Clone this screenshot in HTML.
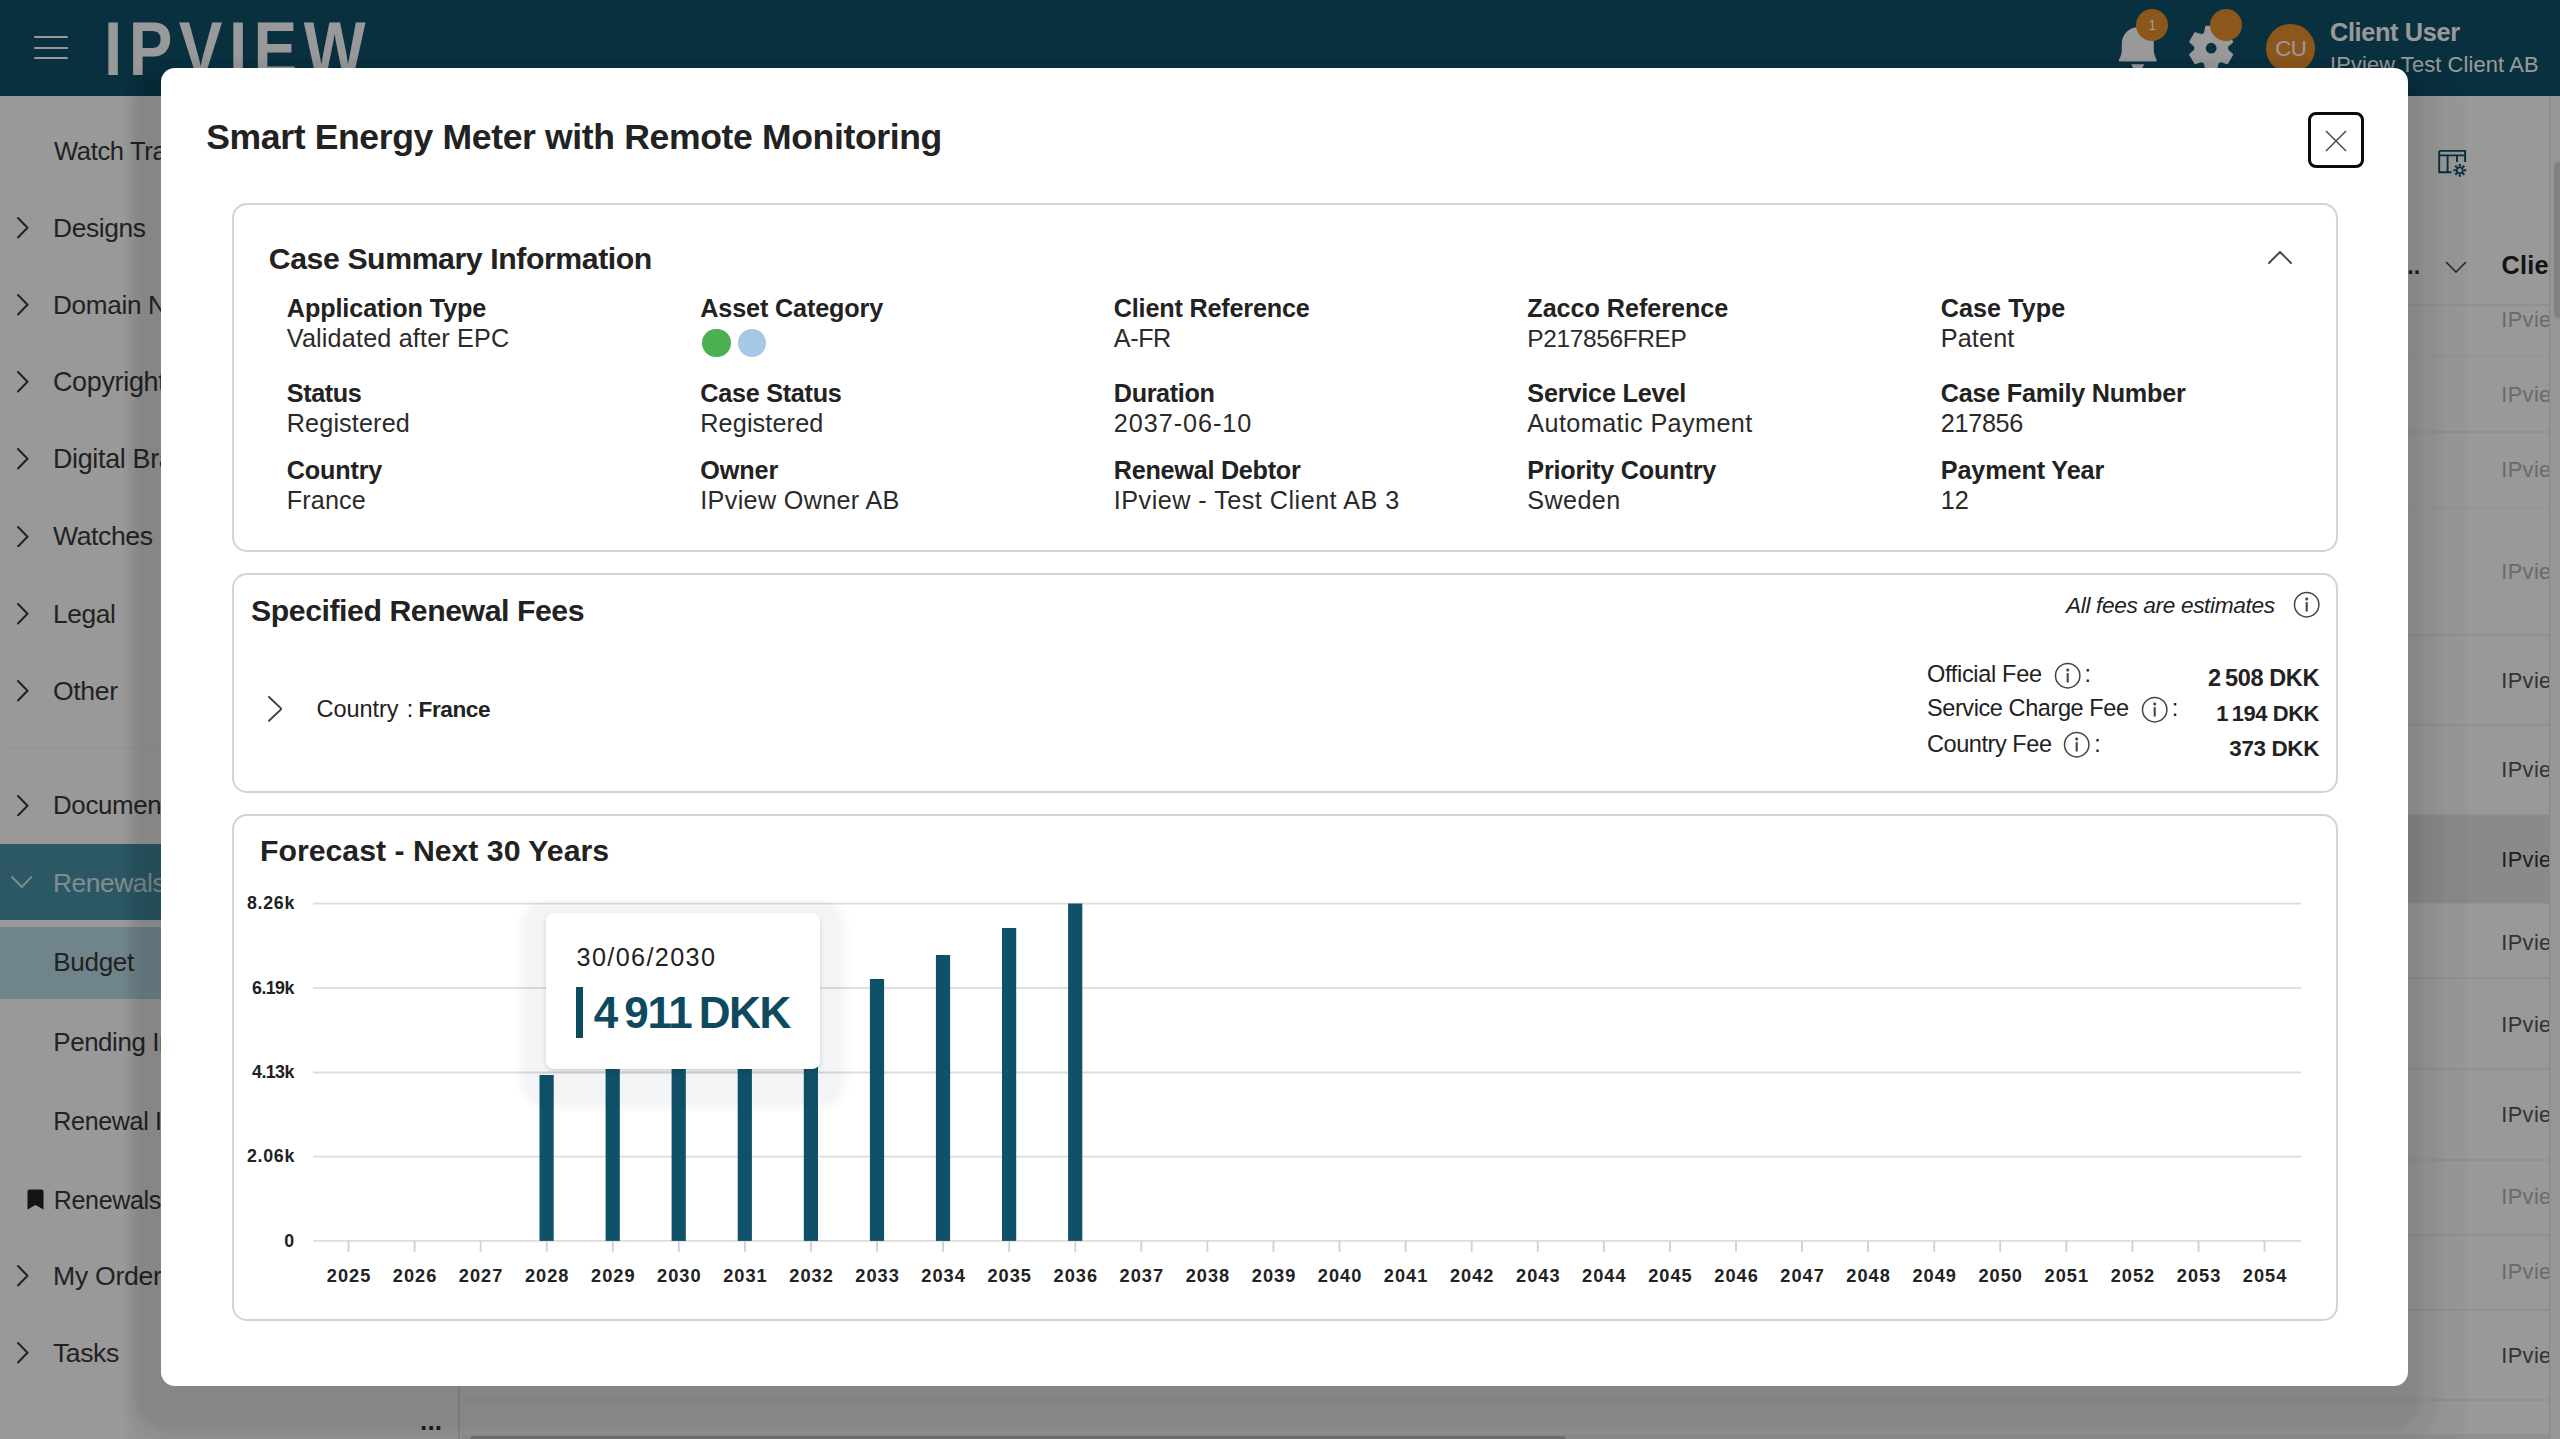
<!DOCTYPE html>
<html lang="en"><head><meta charset="utf-8"><title>IPview - Renewals Budget</title>
<style>
*{box-sizing:border-box;margin:0;padding:0}
html,body{width:2560px;height:1439px;overflow:hidden;background:#fff}
body{font-family:"Liberation Sans", Arial, sans-serif;color:#212121;position:relative}
.t{position:absolute;line-height:1;white-space:nowrap}
.abs{position:absolute}
#app{position:absolute;left:0;top:0;width:2560px;height:1439px;overflow:hidden;background:#fff}
#hdr{position:absolute;left:0;top:0;width:2560px;height:96px;background:#0f516a}
#side{position:absolute;left:0;top:96px;width:460px;height:1343px;background:#fff;border-right:2px solid #e4e4e4}
#main{position:absolute;left:462px;top:96px;width:2098px;height:1343px;background:#fff}
#ovl{position:absolute;left:0;top:0;width:2560px;height:1439px;background:rgba(0,0,0,.4)}
#modal{position:absolute;left:161px;top:68px;width:2247px;height:1318px;background:#fff;border-radius:14px;
 box-shadow:-6px 24px 5px 20px rgba(0,0,0,.05),-1px 24px 5px 33px rgba(0,0,0,.034),11px 40px 6px 46px rgba(0,0,0,.026)}
.card{position:absolute;border:2px solid #d3d3d3;border-radius:15px;background:#fff}
.badge{position:absolute;width:32px;height:32px;border-radius:50%;background:#e8912d}
.sep{position:absolute;height:1.5px;background:#f2f2f2}
</style></head><body>
<div id="app">
<div id="hdr">
<div class="abs" style="left:34px;top:36px;width:34px;height:2.4px;background:#fff;border-radius:1px"></div>
<div class="abs" style="left:34px;top:46.5px;width:34px;height:2.4px;background:#fff;border-radius:1px"></div>
<div class="abs" style="left:34px;top:57px;width:34px;height:2.4px;background:#fff;border-radius:1px"></div>
<div class="t" style="top:11px;font-size:76.5px;left:103.5px;font-weight:700;color:#fff;letter-spacing:7.60px;transform:scaleX(.855);transform-origin:0 0;">IPVIEW</div>
<svg class="abs" style="left:2110px;top:20px" width="56" height="56" viewBox="2110 20 56 56"><path d="M2121.8 43.2A16 16 0 0 1 2153.8 43.2V49.5C2153.8 54 2155.2 57.2 2156.6 59.6a1.300 1.300 0 0 1-1.200 2H2120.200a1.300 1.300 0 0 1-1.200-2C2120.400 57.2 2121.8 54 2121.8 49.5Z" fill="#fff"/><path d="M2131.2 64.300H2144.200L2141.300 70H2134.100Z" fill="#fff"/></svg>
<div class="badge" style="left:2136.100px;top:9.400px"></div>
<div class="t" style="top:18px;font-size:14.6px;left:2148.3px;color:#fff;">1</div>
<svg class="abs" style="left:2186.4px;top:22.8px" width="50.4" height="50.4" viewBox="0 0 50.4 50.4"><path d="M18.61 10.40 L20.02 3.61 L30.38 3.61 L31.79 10.40 L34.73 12.09 L41.30 9.92 L46.49 18.89 L41.32 23.51 L41.32 26.89 L46.49 31.51 L41.30 40.48 L34.73 38.31 L31.79 40.00 L30.38 46.79 L20.02 46.79 L18.61 40.00 L15.67 38.31 L9.10 40.48 L3.91 31.51 L9.08 26.89 L9.08 23.51 L3.91 18.89 L9.10 9.92 L15.67 12.09Z M19.80 25.20 a5.40 5.40 0 1 0 10.80 0 a5.40 5.40 0 1 0 -10.80 0Z" fill="#fff" fill-rule="evenodd"/><path d="M18.61 10.40 L20.02 3.61 L30.38 3.61 L31.79 10.40 L34.73 12.09 L41.30 9.92 L46.49 18.89 L41.32 23.51 L41.32 26.89 L46.49 31.51 L41.30 40.48 L34.73 38.31 L31.79 40.00 L30.38 46.79 L20.02 46.79 L18.61 40.00 L15.67 38.31 L9.10 40.48 L3.91 31.51 L9.08 26.89 L9.08 23.51 L3.91 18.89 L9.10 9.92 L15.67 12.09Z" fill="none" stroke="#fff" stroke-width="1.6" stroke-linejoin="round"/></svg>
<div class="badge" style="left:2209.700px;top:9.400px"></div>
<div class="abs" style="left:2265.700px;top:23.700px;width:49.200px;height:49.200px;border-radius:50%;background:#e8912d"></div>
<div class="t" style="top:38px;font-size:22.3px;left:2275.2px;color:#fff;letter-spacing:-0.42px;">CU</div>
<div class="t" style="top:20px;font-size:25.34px;left:2330.0px;font-weight:700;color:#fff;letter-spacing:-0.37px;">Client User</div>
<div class="t" style="top:54px;font-size:21.84px;left:2330.0px;color:#fff;letter-spacing:0.13px;">IPview Test Client AB</div>
</div>
<div id="side">
<div class="t" style="top:43px;font-size:25.6px;left:54.0px;color:#3a3a3a;letter-spacing:-0.38px;">Watch Trademarks</div>
<svg class="abs" style="left:17px;top:121.39999999999999px" width="11.5" height="21.5" viewBox="0 0 11.5 21.5"><polyline points="1,1 10.5,10.75 1,20.5" fill="none" stroke="#3a3a3a" stroke-width="2" stroke-linecap="round" stroke-linejoin="round"/></svg>
<div class="t" style="top:119px;font-size:26.37px;left:53.0px;color:#3a3a3a;letter-spacing:-0.37px;">Designs</div>
<svg class="abs" style="left:17px;top:198.39999999999998px" width="11.5" height="21.5" viewBox="0 0 11.5 21.5"><polyline points="1,1 10.5,10.75 1,20.5" fill="none" stroke="#3a3a3a" stroke-width="2" stroke-linecap="round" stroke-linejoin="round"/></svg>
<div class="t" style="top:196px;font-size:26.11px;left:53.0px;color:#3a3a3a;letter-spacing:-0.31px;">Domain Names</div>
<svg class="abs" style="left:17px;top:275.4px" width="11.5" height="21.5" viewBox="0 0 11.5 21.5"><polyline points="1,1 10.5,10.75 1,20.5" fill="none" stroke="#3a3a3a" stroke-width="2" stroke-linecap="round" stroke-linejoin="round"/></svg>
<div class="t" style="top:273px;font-size:26.88px;left:53.0px;color:#3a3a3a;letter-spacing:-0.29px;">Copyrights</div>
<svg class="abs" style="left:17px;top:352.4px" width="11.5" height="21.5" viewBox="0 0 11.5 21.5"><polyline points="1,1 10.5,10.75 1,20.5" fill="none" stroke="#3a3a3a" stroke-width="2" stroke-linecap="round" stroke-linejoin="round"/></svg>
<div class="t" style="top:350px;font-size:26.88px;left:53.0px;color:#3a3a3a;letter-spacing:-0.32px;">Digital Brand Protection</div>
<svg class="abs" style="left:17px;top:429.90000000000003px" width="11.5" height="21.5" viewBox="0 0 11.5 21.5"><polyline points="1,1 10.5,10.75 1,20.5" fill="none" stroke="#3a3a3a" stroke-width="2" stroke-linecap="round" stroke-linejoin="round"/></svg>
<div class="t" style="top:427px;font-size:26.62px;left:53.0px;color:#3a3a3a;letter-spacing:-0.42px;">Watches</div>
<svg class="abs" style="left:17px;top:507.40000000000003px" width="11.5" height="21.5" viewBox="0 0 11.5 21.5"><polyline points="1,1 10.5,10.75 1,20.5" fill="none" stroke="#3a3a3a" stroke-width="2" stroke-linecap="round" stroke-linejoin="round"/></svg>
<div class="t" style="top:505px;font-size:26.37px;left:53.0px;color:#3a3a3a;letter-spacing:-0.38px;">Legal</div>
<svg class="abs" style="left:17px;top:584.4000000000001px" width="11.5" height="21.5" viewBox="0 0 11.5 21.5"><polyline points="1,1 10.5,10.75 1,20.5" fill="none" stroke="#3a3a3a" stroke-width="2" stroke-linecap="round" stroke-linejoin="round"/></svg>
<div class="t" style="top:582px;font-size:26.62px;left:53.0px;color:#3a3a3a;letter-spacing:-0.39px;">Other</div>
<div class="sep" style="left:4px;top:650.5px;width:452px"></div>
<svg class="abs" style="left:17px;top:698.9000000000001px" width="11.5" height="21.5" viewBox="0 0 11.5 21.5"><polyline points="1,1 10.5,10.75 1,20.5" fill="none" stroke="#3a3a3a" stroke-width="2" stroke-linecap="round" stroke-linejoin="round"/></svg>
<div class="t" style="top:697px;font-size:25.86px;left:53.0px;color:#3a3a3a;letter-spacing:-0.34px;">Documents</div>
<div class="abs" style="left:0;top:747.5px;width:460px;height:76.5px;background:#4a92a8"></div>
<svg class="abs" style="left:10.5px;top:780.2px" width="21.5" height="12" viewBox="0 0 21.5 12"><polyline points="1,1 10.75,11 20.5,1" fill="none" stroke="#d5eaf0" stroke-width="1.9" stroke-linecap="round" stroke-linejoin="round"/></svg>
<div class="t" style="top:774px;font-size:26.37px;left:53.0px;color:#d5eaf0;letter-spacing:-0.45px;">Renewals</div>
<div class="abs" style="left:0;top:831px;width:460px;height:72px;background:#bbdde8"></div>
<div class="t" style="top:853px;font-size:26.11px;left:53.3px;color:#3a3a3a;letter-spacing:-0.35px;">Budget</div>
<div class="t" style="top:934px;font-size:25.86px;left:53.3px;color:#3a3a3a;letter-spacing:-0.40px;">Pending Instructions</div>
<div class="t" style="top:1013px;font-size:25.09px;left:53.3px;color:#3a3a3a;letter-spacing:-0.35px;">Renewal Instructions</div>
<svg class="abs" style="left:27px;top:1093px" width="17" height="21" viewBox="0 0 17 21"><path d="M2.500 0.500h12a2 2 0 0 1 2 2V20.500l-8-4.600-8 4.600V2.500a2 2 0 0 1 2-2z" fill="#222"/></svg>
<div class="t" style="top:1092px;font-size:25.09px;left:53.8px;color:#3a3a3a;letter-spacing:-0.38px;">Renewals Overview</div>
<svg class="abs" style="left:17px;top:1169.4px" width="11.5" height="21.5" viewBox="0 0 11.5 21.5"><polyline points="1,1 10.5,10.75 1,20.5" fill="none" stroke="#3a3a3a" stroke-width="2" stroke-linecap="round" stroke-linejoin="round"/></svg>
<div class="t" style="top:1167px;font-size:26.62px;left:53.0px;color:#3a3a3a;letter-spacing:-0.29px;">My Orders</div>
<svg class="abs" style="left:17px;top:1246.4px" width="11.5" height="21.5" viewBox="0 0 11.5 21.5"><polyline points="1,1 10.5,10.75 1,20.5" fill="none" stroke="#3a3a3a" stroke-width="2" stroke-linecap="round" stroke-linejoin="round"/></svg>
<div class="t" style="top:1244px;font-size:26.62px;left:53.0px;color:#3a3a3a;letter-spacing:-0.43px;">Tasks</div>
<div class="t" style="top:1312px;font-size:26px;left:420.0px;font-weight:700;color:#333;letter-spacing:0.16px;">...</div>
</div>
<div id="main">
<svg class="abs" style="left:1974px;top:52px" width="34" height="32" viewBox="2436 148 34 32" fill="none" stroke="#0f516a"><path d="M2439.200 150.900H2465.100V162M2439.200 150.900V172.200H2451.500M2439.200 155.400H2465.100M2447.600 155.400V172.200M2457 155.400V162" stroke-width="1.900"/><circle cx="2459.8" cy="170.3" r="3" stroke-width="1.700"/><path d="M2463.70 170.30L2466.20 170.30M2462.56 173.06L2464.33 174.83M2459.80 174.20L2459.80 176.70M2457.04 173.06L2455.27 174.83M2455.90 170.30L2453.40 170.30M2457.04 167.54L2455.27 165.77M2459.80 166.40L2459.80 163.90M2462.56 167.54L2464.33 165.77" stroke-width="2.100"/></svg>
<div class="t" style="top:159px;font-size:23.4px;left:1938.8px;font-weight:700;color:#333;">...</div>
<svg class="abs" style="left:1983px;top:164.5px" width="22" height="12" viewBox="0 0 22 12"><polyline points="1,1 11,11 21,1" fill="none" stroke="#444" stroke-width="1.600"/></svg>
<div class="t" style="top:157px;font-size:25.2px;left:2039.5px;font-weight:700;color:#222;letter-spacing:0.30px;">Client</div>
<div class="sep" style="left:0;top:208px;width:2087px"></div>
<div class="sep" style="left:0;top:259.5px;width:2087px"></div>
<div class="sep" style="left:0;top:335px;width:2087px"></div>
<div class="sep" style="left:0;top:410.5px;width:2087px"></div>
<div class="sep" style="left:0;top:538px;width:2087px"></div>
<div class="sep" style="left:0;top:628px;width:2087px"></div>
<div class="sep" style="left:0;top:718px;width:2087px"></div>
<div class="sep" style="left:0;top:806px;width:2087px"></div>
<div class="sep" style="left:0;top:881px;width:2087px"></div>
<div class="sep" style="left:0;top:972px;width:2087px"></div>
<div class="sep" style="left:0;top:1063px;width:2087px"></div>
<div class="sep" style="left:0;top:1138px;width:2087px"></div>
<div class="sep" style="left:0;top:1213px;width:2087px"></div>
<div class="sep" style="left:0;top:1303px;width:2087px"></div>
<div class="abs" style="left:0;top:719px;width:2087px;height:87.5px;background:#e7e7e7"></div>
<div class="t" style="top:213px;font-size:21.84px;left:2039.3px;color:#b2b2b2;letter-spacing:0.35px;">IPview</div>
<div class="t" style="top:288px;font-size:21.84px;left:2039.3px;color:#b2b2b2;letter-spacing:0.35px;">IPview</div>
<div class="t" style="top:363px;font-size:21.84px;left:2039.3px;color:#b2b2b2;letter-spacing:0.35px;">IPview</div>
<div class="t" style="top:465px;font-size:21.84px;left:2039.3px;color:#b2b2b2;letter-spacing:0.35px;">IPview</div>
<div class="t" style="top:574px;font-size:21.84px;left:2039.3px;color:#555;letter-spacing:0.35px;">IPview</div>
<div class="t" style="top:663px;font-size:21.84px;left:2039.3px;color:#555;letter-spacing:0.35px;">IPview</div>
<div class="t" style="top:753px;font-size:21.84px;left:2039.3px;color:#333;letter-spacing:0.35px;">IPview</div>
<div class="t" style="top:836px;font-size:21.84px;left:2039.3px;color:#555;letter-spacing:0.35px;">IPview</div>
<div class="t" style="top:918px;font-size:21.84px;left:2039.3px;color:#555;letter-spacing:0.35px;">IPview</div>
<div class="t" style="top:1008px;font-size:21.84px;left:2039.3px;color:#555;letter-spacing:0.35px;">IPview</div>
<div class="t" style="top:1090px;font-size:21.84px;left:2039.3px;color:#b2b2b2;letter-spacing:0.35px;">IPview</div>
<div class="t" style="top:1165px;font-size:21.84px;left:2039.3px;color:#b2b2b2;letter-spacing:0.35px;">IPview</div>
<div class="t" style="top:1249px;font-size:21.84px;left:2039.3px;color:#555;letter-spacing:0.35px;">IPview</div>
<div class="abs" style="left:2087px;top:0;width:11px;height:1343px;background:#fafafa;border-left:1.5px solid #e2e2e2"></div>
<div class="abs" style="left:2092px;top:66px;width:8px;height:156px;border-radius:4px;background:#d8d8d8"></div>
<div class="abs" style="left:69px;top:1330.5px;width:22px;height:22px;border-radius:50%;border:1.5px solid #fff"></div>
<div class="abs" style="left:0;top:1338px;width:2087px;height:6px;background:#f1f1f1"></div>
<div class="abs" style="left:8px;top:1339.5px;width:1096px;height:8px;border-radius:4px;background:#c2c2c2"></div>
</div>
</div>
<div id="ovl"></div>
<div id="modal">
<div class="t" style="top:52px;font-size:35.55px;left:45.2px;font-weight:700;color:#222;letter-spacing:-0.36px;">Smart Energy Meter with Remote Monitoring</div>
<div class="abs" style="left:2147px;top:44px;width:56px;height:56px;border:3.5px solid #0a0a0a;border-radius:8px"></div>
<svg class="abs" style="left:2164px;top:61.5px" width="22" height="22" viewBox="0 0 22 22"><path d="M1 1l20 20M21 1L1 21" stroke="#4a4a4a" stroke-width="1.500" fill="none"/></svg>
<div class="card" style="left:71px;top:135px;width:2106px;height:349px"></div>
<div class="t" style="top:176px;font-size:30.24px;left:107.8px;font-weight:700;color:#222;letter-spacing:-0.42px;">Case Summary Information</div>
<svg class="abs" style="left:2107px;top:182.5px" width="24" height="13" viewBox="0 0 24 13"><polyline points="1,12 12.0,1 23,12" fill="none" stroke="#444" stroke-width="1.9" stroke-linecap="round" stroke-linejoin="round"/></svg>
<div class="t" style="top:228px;font-size:25.2px;left:125.8px;font-weight:700;color:#222;letter-spacing:-0.10px;">Application Type</div>
<div class="t" style="top:258px;font-size:25.2px;left:125.8px;color:#2a2a2a;letter-spacing:0.17px;">Validated after EPC</div>
<div class="t" style="top:228px;font-size:25.2px;left:539.3px;font-weight:700;color:#222;letter-spacing:-0.14px;">Asset Category</div>
<div class="t" style="top:228px;font-size:25.2px;left:952.8px;font-weight:700;color:#222;letter-spacing:-0.19px;">Client Reference</div>
<div class="t" style="top:258px;font-size:25.2px;left:952.8px;color:#2a2a2a;letter-spacing:-0.42px;">A-FR</div>
<div class="t" style="top:228px;font-size:25.2px;left:1366.3px;font-weight:700;color:#222;letter-spacing:-0.04px;">Zacco Reference</div>
<div class="t" style="top:259px;font-size:24.48px;left:1366.3px;color:#2a2a2a;letter-spacing:-0.37px;">P217856FREP</div>
<div class="t" style="top:228px;font-size:25.2px;left:1779.8px;font-weight:700;color:#222;letter-spacing:0.04px;">Case Type</div>
<div class="t" style="top:258px;font-size:25.2px;left:1779.8px;color:#2a2a2a;letter-spacing:0.13px;">Patent</div>
<div class="t" style="top:313px;font-size:25.2px;left:125.8px;font-weight:700;color:#222;letter-spacing:-0.40px;">Status</div>
<div class="t" style="top:343px;font-size:25.2px;left:125.8px;color:#2a2a2a;letter-spacing:0.13px;">Registered</div>
<div class="t" style="top:313px;font-size:25.2px;left:539.3px;font-weight:700;color:#222;letter-spacing:-0.27px;">Case Status</div>
<div class="t" style="top:343px;font-size:25.2px;left:539.3px;color:#2a2a2a;letter-spacing:0.13px;">Registered</div>
<div class="t" style="top:313px;font-size:25.2px;left:952.8px;font-weight:700;color:#222;letter-spacing:-0.36px;">Duration</div>
<div class="t" style="top:343px;font-size:25.2px;left:952.8px;color:#2a2a2a;letter-spacing:0.96px;">2037-06-10</div>
<div class="t" style="top:313px;font-size:25.2px;left:1366.3px;font-weight:700;color:#222;letter-spacing:-0.17px;">Service Level</div>
<div class="t" style="top:343px;font-size:25.2px;left:1366.3px;color:#2a2a2a;letter-spacing:0.41px;">Automatic Payment</div>
<div class="t" style="top:313px;font-size:25.2px;left:1779.8px;font-weight:700;color:#222;letter-spacing:-0.25px;">Case Family Number</div>
<div class="t" style="top:343px;font-size:25.2px;left:1779.8px;color:#2a2a2a;letter-spacing:-0.31px;">217856</div>
<div class="t" style="top:390px;font-size:25.2px;left:125.8px;font-weight:700;color:#222;letter-spacing:-0.17px;">Country</div>
<div class="t" style="top:420px;font-size:25.2px;left:125.8px;color:#2a2a2a;letter-spacing:0.12px;">France</div>
<div class="t" style="top:390px;font-size:25.2px;left:539.3px;font-weight:700;color:#222;letter-spacing:-0.10px;">Owner</div>
<div class="t" style="top:420px;font-size:25.2px;left:539.3px;color:#2a2a2a;letter-spacing:0.32px;">IPview Owner AB</div>
<div class="t" style="top:390px;font-size:25.2px;left:952.8px;font-weight:700;color:#222;letter-spacing:-0.26px;">Renewal Debtor</div>
<div class="t" style="top:420px;font-size:25.2px;left:952.8px;color:#2a2a2a;letter-spacing:0.48px;">IPview - Test Client AB 3</div>
<div class="t" style="top:390px;font-size:25.2px;left:1366.3px;font-weight:700;color:#222;letter-spacing:-0.18px;">Priority Country</div>
<div class="t" style="top:420px;font-size:25.2px;left:1366.3px;color:#2a2a2a;letter-spacing:0.39px;">Sweden</div>
<div class="t" style="top:390px;font-size:25.2px;left:1779.8px;font-weight:700;color:#222;letter-spacing:-0.12px;">Payment Year</div>
<div class="t" style="top:420px;font-size:25.2px;left:1779.8px;color:#2a2a2a;">12</div>
<div class="abs" style="left:541.3px;top:260.8px;width:28.4px;height:28.4px;border-radius:50%;background:#4caf50"></div>
<div class="abs" style="left:576.8px;top:260.8px;width:28.4px;height:28.4px;border-radius:50%;background:#a6c8e6"></div>
<div class="card" style="left:71px;top:505px;width:2106px;height:219.5px"></div>
<div class="t" style="top:528px;font-size:30.24px;left:90.0px;font-weight:700;color:#222;letter-spacing:-0.44px;">Specified Renewal Fees</div>
<div class="t" style="top:526px;font-size:22.68px;left:1905.0px;color:#222;font-style:italic;letter-spacing:-0.37px;">All fees are estimates</div>
<svg class="abs" style="left:2131.8px;top:522.8px" width="27.4" height="27.4" viewBox="0 0 27.4 27.4"><circle cx="13.70" cy="13.70" r="12.2" fill="none" stroke="#444" stroke-width="1.5"/><circle cx="13.70" cy="8.10" r="1.5" fill="#444"/><rect x="12.65" y="11.10" width="2.1" height="9.4" fill="#444"/></svg>
<svg class="abs" style="left:106.5px;top:627.8px" width="14.5" height="25.8" viewBox="0 0 14.5 25.8"><polyline points="1,1 13.5,12.9 1,24.8" fill="none" stroke="#444" stroke-width="2" stroke-linecap="round" stroke-linejoin="round"/></svg>
<div class="t" style="top:630px;font-size:23.52px;left:155.5px;color:#222;letter-spacing:-0.06px;">Country</div>
<div class="t" style="top:630px;font-size:23.52px;left:245.8px;color:#222;">:</div>
<div class="t" style="top:631px;font-size:22.62px;left:257.5px;font-weight:700;color:#222;letter-spacing:-0.43px;">France</div>
<div class="t" style="top:595px;font-size:23.52px;left:1766.0px;color:#222;letter-spacing:-0.32px;">Official Fee</div>
<svg class="abs" style="left:1892.8px;top:593.9px" width="27.4" height="27.4" viewBox="0 0 27.4 27.4"><circle cx="13.70" cy="13.70" r="12.2" fill="none" stroke="#444" stroke-width="1.5"/><circle cx="13.70" cy="8.10" r="1.5" fill="#444"/><rect x="12.65" y="11.10" width="2.1" height="9.4" fill="#444"/></svg>
<div class="t" style="top:595px;font-size:23.52px;left:1923.5px;color:#222;">:</div>
<div class="t" style="top:599px;font-size:23.52px;right:89.0px;font-weight:700;color:#222;letter-spacing:-0.39px;">2 508 DKK</div>
<div class="t" style="top:629px;font-size:23.52px;left:1766.0px;color:#222;letter-spacing:-0.42px;">Service Charge Fee</div>
<svg class="abs" style="left:1979.8px;top:628.1px" width="27.4" height="27.4" viewBox="0 0 27.4 27.4"><circle cx="13.70" cy="13.70" r="12.2" fill="none" stroke="#444" stroke-width="1.5"/><circle cx="13.70" cy="8.10" r="1.5" fill="#444"/><rect x="12.65" y="11.10" width="2.1" height="9.4" fill="#444"/></svg>
<div class="t" style="top:629px;font-size:23.52px;left:2010.8px;color:#222;">:</div>
<div class="t" style="top:635px;font-size:21.95px;right:89.0px;font-weight:700;color:#222;letter-spacing:-0.44px;">1 194 DKK</div>
<div class="t" style="top:665px;font-size:23.52px;left:1766.0px;color:#222;letter-spacing:-0.44px;">Country Fee</div>
<svg class="abs" style="left:1902.3px;top:663.1px" width="27.4" height="27.4" viewBox="0 0 27.4 27.4"><circle cx="13.70" cy="13.70" r="12.2" fill="none" stroke="#444" stroke-width="1.5"/><circle cx="13.70" cy="8.10" r="1.5" fill="#444"/><rect x="12.65" y="11.10" width="2.1" height="9.4" fill="#444"/></svg>
<div class="t" style="top:665px;font-size:23.52px;left:1933.3px;color:#222;">:</div>
<div class="t" style="top:670px;font-size:22.4px;right:89.0px;font-weight:700;color:#222;letter-spacing:-0.35px;">373 DKK</div>
<div class="card" style="left:71px;top:745.5px;width:2106px;height:507px"></div>
<div class="t" style="top:768px;font-size:30.24px;left:99.0px;font-weight:700;color:#222;">Forecast - Next 30 Years</div>
<svg class="abs" style="left:71px;top:812px" width="2106" height="430" viewBox="232 880 2106 430" font-family="Liberation Sans, Arial, sans-serif" font-weight="700" font-size="17.6" fill="#222"><line x1="313" x2="2301" y1="903.7" y2="903.7" stroke="#dcdcdc" stroke-width="1.8"/><line x1="313" x2="2301" y1="988.1" y2="988.1" stroke="#dcdcdc" stroke-width="1.8"/><line x1="313" x2="2301" y1="1072.5" y2="1072.5" stroke="#dcdcdc" stroke-width="1.8"/><line x1="313" x2="2301" y1="1156.7" y2="1156.7" stroke="#dcdcdc" stroke-width="1.8"/><line x1="313" x2="2301" y1="1240.9" y2="1240.9" stroke="#dcdcdc" stroke-width="1.8"/><text x="246.9" y="909.3" textLength="47.4" lengthAdjust="spacing" font-size="17.8">8.26k</text><text x="252.1" y="993.7" textLength="42.2" lengthAdjust="spacing" font-size="17.8">6.19k</text><text x="252.1" y="1078.1" textLength="42.2" lengthAdjust="spacing" font-size="17.8">4.13k</text><text x="246.9" y="1162.3" textLength="47.4" lengthAdjust="spacing" font-size="17.8">2.06k</text><text x="284.3" y="1246.5" textLength="10" lengthAdjust="spacing" font-size="17.8">0</text><line x1="348.5" x2="348.5" y1="1240.9" y2="1251.8" stroke="#d0d0d0" stroke-width="1.8"/><text x="348.5" y="1281.5" text-anchor="middle" textLength="43.5" lengthAdjust="spacing" font-size="18.2">2025</text><line x1="414.6" x2="414.6" y1="1240.9" y2="1251.8" stroke="#d0d0d0" stroke-width="1.8"/><text x="414.6" y="1281.5" text-anchor="middle" textLength="43.5" lengthAdjust="spacing" font-size="18.2">2026</text><line x1="480.6" x2="480.6" y1="1240.9" y2="1251.8" stroke="#d0d0d0" stroke-width="1.8"/><text x="480.6" y="1281.5" text-anchor="middle" textLength="43.5" lengthAdjust="spacing" font-size="18.2">2027</text><line x1="546.7" x2="546.7" y1="1240.9" y2="1251.8" stroke="#d0d0d0" stroke-width="1.8"/><text x="546.7" y="1281.5" text-anchor="middle" textLength="43.5" lengthAdjust="spacing" font-size="18.2">2028</text><line x1="612.8" x2="612.8" y1="1240.9" y2="1251.8" stroke="#d0d0d0" stroke-width="1.8"/><text x="612.8" y="1281.5" text-anchor="middle" textLength="43.5" lengthAdjust="spacing" font-size="18.2">2029</text><line x1="678.8" x2="678.8" y1="1240.9" y2="1251.8" stroke="#d0d0d0" stroke-width="1.8"/><text x="678.8" y="1281.5" text-anchor="middle" textLength="43.5" lengthAdjust="spacing" font-size="18.2">2030</text><line x1="744.9" x2="744.9" y1="1240.9" y2="1251.8" stroke="#d0d0d0" stroke-width="1.8"/><text x="744.9" y="1281.5" text-anchor="middle" textLength="43.5" lengthAdjust="spacing" font-size="18.2">2031</text><line x1="811.0" x2="811.0" y1="1240.9" y2="1251.8" stroke="#d0d0d0" stroke-width="1.8"/><text x="811.0" y="1281.5" text-anchor="middle" textLength="43.5" lengthAdjust="spacing" font-size="18.2">2032</text><line x1="877.1" x2="877.1" y1="1240.9" y2="1251.8" stroke="#d0d0d0" stroke-width="1.8"/><text x="877.1" y="1281.5" text-anchor="middle" textLength="43.5" lengthAdjust="spacing" font-size="18.2">2033</text><line x1="943.1" x2="943.1" y1="1240.9" y2="1251.8" stroke="#d0d0d0" stroke-width="1.8"/><text x="943.1" y="1281.5" text-anchor="middle" textLength="43.5" lengthAdjust="spacing" font-size="18.2">2034</text><line x1="1009.2" x2="1009.2" y1="1240.9" y2="1251.8" stroke="#d0d0d0" stroke-width="1.8"/><text x="1009.2" y="1281.5" text-anchor="middle" textLength="43.5" lengthAdjust="spacing" font-size="18.2">2035</text><line x1="1075.3" x2="1075.3" y1="1240.9" y2="1251.8" stroke="#d0d0d0" stroke-width="1.8"/><text x="1075.3" y="1281.5" text-anchor="middle" textLength="43.5" lengthAdjust="spacing" font-size="18.2">2036</text><line x1="1141.3" x2="1141.3" y1="1240.9" y2="1251.8" stroke="#d0d0d0" stroke-width="1.8"/><text x="1141.3" y="1281.5" text-anchor="middle" textLength="43.5" lengthAdjust="spacing" font-size="18.2">2037</text><line x1="1207.4" x2="1207.4" y1="1240.9" y2="1251.8" stroke="#d0d0d0" stroke-width="1.8"/><text x="1207.4" y="1281.5" text-anchor="middle" textLength="43.5" lengthAdjust="spacing" font-size="18.2">2038</text><line x1="1273.5" x2="1273.5" y1="1240.9" y2="1251.8" stroke="#d0d0d0" stroke-width="1.8"/><text x="1273.5" y="1281.5" text-anchor="middle" textLength="43.5" lengthAdjust="spacing" font-size="18.2">2039</text><line x1="1339.5" x2="1339.5" y1="1240.9" y2="1251.8" stroke="#d0d0d0" stroke-width="1.8"/><text x="1339.5" y="1281.5" text-anchor="middle" textLength="43.5" lengthAdjust="spacing" font-size="18.2">2040</text><line x1="1405.6" x2="1405.6" y1="1240.9" y2="1251.8" stroke="#d0d0d0" stroke-width="1.8"/><text x="1405.6" y="1281.5" text-anchor="middle" textLength="43.5" lengthAdjust="spacing" font-size="18.2">2041</text><line x1="1471.7" x2="1471.7" y1="1240.9" y2="1251.8" stroke="#d0d0d0" stroke-width="1.8"/><text x="1471.7" y="1281.5" text-anchor="middle" textLength="43.5" lengthAdjust="spacing" font-size="18.2">2042</text><line x1="1537.8" x2="1537.8" y1="1240.9" y2="1251.8" stroke="#d0d0d0" stroke-width="1.8"/><text x="1537.8" y="1281.5" text-anchor="middle" textLength="43.5" lengthAdjust="spacing" font-size="18.2">2043</text><line x1="1603.8" x2="1603.8" y1="1240.9" y2="1251.8" stroke="#d0d0d0" stroke-width="1.8"/><text x="1603.8" y="1281.5" text-anchor="middle" textLength="43.5" lengthAdjust="spacing" font-size="18.2">2044</text><line x1="1669.9" x2="1669.9" y1="1240.9" y2="1251.8" stroke="#d0d0d0" stroke-width="1.8"/><text x="1669.9" y="1281.5" text-anchor="middle" textLength="43.5" lengthAdjust="spacing" font-size="18.2">2045</text><line x1="1736.0" x2="1736.0" y1="1240.9" y2="1251.8" stroke="#d0d0d0" stroke-width="1.8"/><text x="1736.0" y="1281.5" text-anchor="middle" textLength="43.5" lengthAdjust="spacing" font-size="18.2">2046</text><line x1="1802.0" x2="1802.0" y1="1240.9" y2="1251.8" stroke="#d0d0d0" stroke-width="1.8"/><text x="1802.0" y="1281.5" text-anchor="middle" textLength="43.5" lengthAdjust="spacing" font-size="18.2">2047</text><line x1="1868.1" x2="1868.1" y1="1240.9" y2="1251.8" stroke="#d0d0d0" stroke-width="1.8"/><text x="1868.1" y="1281.5" text-anchor="middle" textLength="43.5" lengthAdjust="spacing" font-size="18.2">2048</text><line x1="1934.2" x2="1934.2" y1="1240.9" y2="1251.8" stroke="#d0d0d0" stroke-width="1.8"/><text x="1934.2" y="1281.5" text-anchor="middle" textLength="43.5" lengthAdjust="spacing" font-size="18.2">2049</text><line x1="2000.2" x2="2000.2" y1="1240.9" y2="1251.8" stroke="#d0d0d0" stroke-width="1.8"/><text x="2000.2" y="1281.5" text-anchor="middle" textLength="43.5" lengthAdjust="spacing" font-size="18.2">2050</text><line x1="2066.3" x2="2066.3" y1="1240.9" y2="1251.8" stroke="#d0d0d0" stroke-width="1.8"/><text x="2066.3" y="1281.5" text-anchor="middle" textLength="43.5" lengthAdjust="spacing" font-size="18.2">2051</text><line x1="2132.4" x2="2132.4" y1="1240.9" y2="1251.8" stroke="#d0d0d0" stroke-width="1.8"/><text x="2132.4" y="1281.5" text-anchor="middle" textLength="43.5" lengthAdjust="spacing" font-size="18.2">2052</text><line x1="2198.5" x2="2198.5" y1="1240.9" y2="1251.8" stroke="#d0d0d0" stroke-width="1.8"/><text x="2198.5" y="1281.5" text-anchor="middle" textLength="43.5" lengthAdjust="spacing" font-size="18.2">2053</text><line x1="2264.5" x2="2264.5" y1="1240.9" y2="1251.8" stroke="#d0d0d0" stroke-width="1.8"/><text x="2264.5" y="1281.5" text-anchor="middle" textLength="43.5" lengthAdjust="spacing" font-size="18.2">2054</text><rect x="539.5" y="1075" width="14.2" height="165.9" fill="#0e5169"/><rect x="605.6" y="1061" width="14.2" height="179.9" fill="#0e5169"/><rect x="671.6" y="1040" width="14.2" height="200.9" fill="#0e5169"/><rect x="737.7" y="1030" width="14.2" height="210.9" fill="#0e5169"/><rect x="803.8" y="1000" width="14.2" height="240.9" fill="#0e5169"/><rect x="869.9" y="979" width="14.2" height="261.9" fill="#0e5169"/><rect x="935.9" y="955" width="14.2" height="285.9" fill="#0e5169"/><rect x="1002.0" y="928" width="14.2" height="312.9" fill="#0e5169"/><rect x="1068.1" y="903.5" width="14.2" height="337.4" fill="#0e5169"/></svg>
<div class="abs" style="left:384.5px;top:845px;width:274.5px;height:156px;border-radius:8px;background:#fff;box-shadow:0 2px 4px rgba(20,30,40,.16),0 13px 8px 25px rgba(40,60,80,.055)"></div>
<div class="t" style="top:877px;font-size:25.2px;left:415.5px;color:#222;letter-spacing:1.38px;">30/06/2030</div>
<div class="abs" style="left:414.5px;top:919.3px;width:7.5px;height:51.2px;background:#0d4a60"></div>
<div class="t" style="top:923px;font-size:44px;left:432.8px;font-weight:700;color:#0d4a60;letter-spacing:-1.36px;">4 911 DKK</div>
</div>
</body></html>
